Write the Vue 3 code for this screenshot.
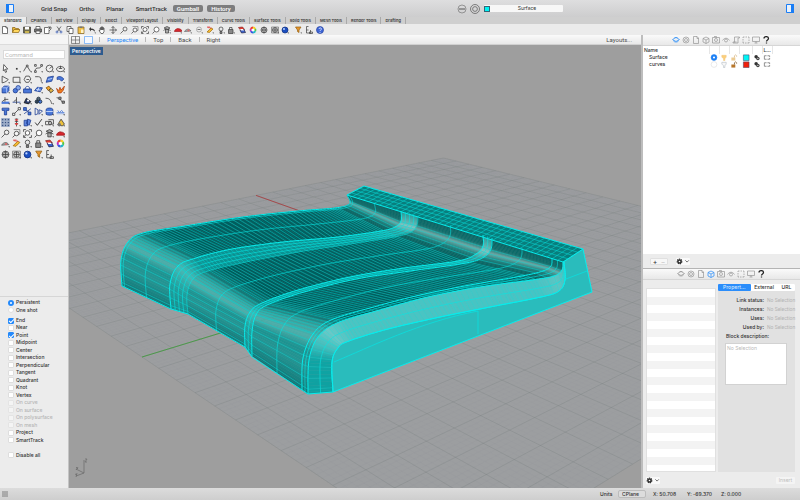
<script setup>
import { ref, h } from 'vue'

/* ---------- icons: each entry is a list of [path, fill, stroke] on a 16 grid ---------- */
const K = '#3c3c3c'
const B = '#4a78d8'
const N = 'none'
const tick = ['M13 13h3l-1.500 2.500z', K, N]
const lens = (x, y, r) => `M${x - r} ${y}a${r} ${r} 0 1 0 ${2 * r} 0a${r} ${r} 0 1 0 ${-2 * r} 0z`
const ICONS = {
  file: [['M3 1h7l3 3v11H3z', '#fff', K], ['M10 1v3h3', N, K]],
  open: [['M1 13V3h5l1 2h6v3', '#e8b93c', '#8a6414'], ['M1 13l3-6h12l-3 6z', '#ffd75e', '#8a6414']],
  save: [['M1 2h14v12H1z', '#6f6a4a', K], ['M4 2h8v5H4z', '#fff', N], ['M4 10h8v4H4z', '#c9b452', N]],
  print: [['M4 6V1h8v5', '#fff', K], ['M1 6h14v6H1z', '#777', K], ['M4 10h8v5H4z', '#fff', K]],
  notes: [['M1 3h9v12H1z', '#fff', K], ['M8 2h6v4l-4 4M11 2v4', '#ddd', K]],
  cut: [['M4 1l7 10M12 1L5 11', N, K], [lens(4, 12, 2), N, '#2f55b5'], [lens(12, 12, 2), N, '#2f55b5']],
  copy: [['M2 1h8v10H2z', '#fff', K], ['M6 5h8v10H6z', '#fff', K]],
  paste: [['M2 2h12v13H2z', '#f1bf45', '#7e6020'], ['M5 1h6v3H5z', '#777', N], ['M8 7h5v7H8z', '#fff3c9', N]],
  undo: [['M2 6l4-4v3c6 0 8 3 8 7-2-3-4-4-8-4v3z', K, N], tick],
  hand: [['M4 9V4h2v4-6h2v6-6h2v6-4h2v7l-2 4H6L2 9z', '#fff', K]],
  pan: [['M8 1v14M1 8h14M5 4l3-3 3 3M5 12l3 3 3-3M12 5l3 3-3 3', N, K]],
  zoom: [[lens(10, 6, 4), '#eee', K], ['M7 9l-6 6', N, K]],
  zoomwin: [['M3 1h11v8H7', N, '#777'], [lens(8, 8, 4), '#f6f6f6', K], ['M5 11l-4 4', N, K]],
  zoomext: [[lens(8, 7, 4), '#fff', K], ['M1 5V1h4M11 1h4v4M1 11v4h4M11 15h4v-4M5 10l-3 4', N, K]],
  zoomsel: [[lens(9, 7, 5), '#fff', K], ['M5 11l-4 4', N, K]],
  cube: [['M2 4l6-3 6 3-5 3zM5 6v8h6V6', '#aaa', K], ['M1 9c2-3 10-3 14 0', N, K], tick],
  car: [['M1 10l2-3 4-2 5 1 3 2v3H1z', '#d8262c', '#a01c20'], tick],
  plane: [['M1 11c3-5 9-7 13-1z', '#aaa', '#666'], [lens(9, 9, 2), '#d66', N], tick],
  dash: [[lens(8, 7, 5), '#eee', '#999'], ['M5 7h6', N, K], tick],
  snap: [['M2 12l8-8 4 2-7 7z', '#f4ba32', '#a06e10'], ['M2 2h6M3 3l8 1', N, '#d33'], tick],
  bulb: [[lens(8, 6, 4), '#e8e8e8', K], ['M6 11h4v4H6z', '#888', K], tick],
  lock: [['M3 7h9v8H3z', '#888', K], ['M5 7V3h5v4', N, K], tick],
  layers: [['M1 3l8-1 4 5-8 1z', '#e0392e', '#822'], ['M4 8l8-1 3 6-8 1z', '#3c62cc', '#224'], ['M4 6l6 0 2 3H6z', '#fff', N]],
  globe: [[lens(8, 8, 6), '#eee', K], ['M8 2v12M2 8h12M8 2c-4 3-4 9 0 12M8 2c4 3 4 9 0 12', N, K]],
  gridball: [['M1 2h14v12H1z', '#ddd', '#777'], [lens(8, 8, 5), '#ccc', K], ['M3 8h10M8 3v10', N, K], tick],
  ball: [[lens(8, 8, 6), '#1c4fc0', '#0c2c80'], [lens(6, 6, 2), '#bcd4ff', N], tick],
  wheel: [['M8 8V1a7 7 0 0 1 6 4z', '#f8d020', N], ['M8 8l6-3a7 7 0 0 1 0 6z', '#58c840', N], ['M8 8l6 3a7 7 0 0 1-6 4z', '#20b8c8', N], ['M8 8v7a7 7 0 0 1-6-4z', '#3858e0', N], ['M8 8l-6 3a7 7 0 0 1 0-6z', '#c030c0', N], ['M8 8L2 5a7 7 0 0 1 6-4z', '#f04030', N], [lens(8, 8, 3), '#fff', N]],
  filter: [['M3 2h11l-4 6v5l-3-2V8z', '#e7962c', '#95600f'], tick],
  dims: [['M3 1h4M3 1v7h4M3 8v6h9M11 8v5M9 12h6v3H9z', N, K]],
  help: [[lens(8, 8, 7), '#3f67d8', '#2742a0'], ['M6 6c0-3 5-3 5 0 0 2-3 2-3 4M8 12v2', N, '#fff']],
  arrow: [['M5 1l7 8H8l2 5-2 1-2-5-2 2z', '#fff', K]],
  point: [['M7 7h3v3H7z', K, N], tick],
  polyline: [['M1 13l6-10 6 10', N, K], ['M6 2h3v3H6z', '#fff', K], tick],
  ctrl: [['M2 13C2 2 13 12 13 2', N, K], ['M1 1h3v3H1zM12 1h3v3h-3zM1 12h3v3H1z', '#fff', K], tick],
  circle: [[lens(8, 8, 6), '#eee', K], ['M8 8l5-4', N, K], tick],
  ellipse: [['M1 9c0-6 14-6 14 0s-14 6-14 0z', '#eee', K], ['M5 8h6M8 3v5', N, K], tick],
  arc: [['M2 2v12c6-1 9-4 11-6', N, K], ['M2 2l11 6', N, K], tick],
  rect: [['M2 4h12v9H2z', '#eee', K], tick],
  polygon: [['M5 2h6l3 5-4 6H5L2 8z', '#eee', K], ['M6 8h5', N, K], tick],
  fillet: [['M2 3h6c4 0 5 3 5 9', N, K], tick],
  srf: [['M2 13l3-9 10-2-3 9z', B, '#1d3d92'], ['M5 8l8-2', N, '#cfe0ff']],
  srf2: [['M2 4c5-3 9 0 12 3l-4 4C8 8 5 7 2 8z', B, '#1d3d92'], tick],
  box: [['M2 5l4-3h8v8l-4 4H2z', B, '#1d3d92'], ['M2 5h8l4-3M10 5v9', N, '#bcd0ff'], tick],
  balls: [[lens(6, 10, 4), B, '#1d3d92'], [lens(11, 5, 4), '#86a8ee', '#1d3d92'], tick],
  tub: [['M1 7h14v7H1z', B, '#1d3d92'], ['M4 7c0-6 8-6 8 0z', '#fff', '#1d3d92']],
  patch: [['M1 10l5-6 9 1-4 7z', B, '#1d3d92'], ['M4 8l8 1M9 4l-3 7', N, '#dfe9ff'], tick],
  gear: [['M2 5l5-3 3 4-4 4z', '#f2a52c', '#7c4b00'], ['M7 9l4-3 4 4-5 4z', '#e5b84a', '#333']],
  flame: [['M4 14L1 6l4 4 2-6 2 5 6-7-2 7-4 5z', '#f08020', '#b04010'], tick],
  trim: [['M1 10h14v4H1z', B, N], ['M7 2v8M2 10l5-4h6', N, K], tick],
  split: [['M1 11h14', N, '#1d3d92'], ['M8 2v12M3 10l5-4', N, K], tick],
  join: [['M2 12l4-8 8 6-4 4z', '#2e3f6c', '#111'], [lens(9, 8, 2), '#fff', N], tick],
  bool: [[lens(5, 10, 3), '#345', '#123'], [lens(11, 10, 3), B, '#123'], [lens(8, 5, 3), '#567', '#123']],
  curve: [['M1 4c8 0 9 4 11 10', N, K], tick],
  curve2: [['M1 3l5 1M7 5l5 7', N, K], ['M5 2h4v4H5zM11 9h4v4h-4z', '#999', K]],
  text: [['M2 2h12v4h-4v8H6V6H2z', B, '#1d3d92']],
  line: [['M3 13L13 3', N, K], ['M1 11h4v4H1zM11 1h4v4h-4z', '#fff', K], tick],
  rotate: [['M2 3l12 9M2 12l12-9', N, '#1d3d92'], ['M1 1h5v5H1zM9 9h5v5H9z', B, '#1d3d92']],
  mirror: [['M2 2l5 3v7l-5 2zM9 5l6 2-6 6z', '#eee', '#1d3d92'], tick],
  solid: [['M2 4c2-3 10-3 12 0v9c-2 2-10 2-12 0z', B, '#1d3d92'], ['M2 8h12', N, '#dfe9ff'], tick],
  level: [['M1 10h14M3 6l3 4 4-4 3 4', N, B], ['M1 12h14', N, '#8aa8e6'], tick],
  array: [['M1 1h4v4H1zM6 1h4v4H6zM11 1h4v4h-4zM1 6h4v4H1zM6 6h4v4H6zM11 6h4v4h-4zM1 11h4v4H1zM6 11h4v4H6zM11 11h4v4h-4z', '#36507f', '#9fb0cc']],
  tower: [['M8 1v14M5 2h6M5 6h6M5 10h6', N, K], ['M6 2h4v3H6zM6 9h4v3H6z', '#e33', N], tick],
  flip: [['M2 4h6v10H2zM8 2l6 2-3 9-5-3z', '#5f86df', '#1d3d92'], tick],
  check: [['M2 8l4 5 8-11', N, '#111'], tick],
  mask: [['M1 6h9v6H1zM6 3h9v8H9', '#eee', K], [lens(9, 9, 3), '#bbb', K], tick],
  cone: [['M3 12L9 2l6 9-4 3z', '#efc23a', K], [lens(6, 12, 3), '#777', N], tick],
}
const Icon = (p) =>
  h('svg', { viewBox: '0 0 16 16', class: 'ic', 'aria-hidden': 'true' },
    ICONS[p.n].map(([d, fill, stroke]) => h('path', { d, fill, stroke, 'stroke-width': 1.4 })))
Icon.props = ['n']

/* panel switcher icons: outline glyphs */
const P = {
  layer: 'M1 7l7-4 7 4-7 4zM3 9c0 4 10 4 10 0M5 3h6',
  ring: lens(8, 8, 6) + lens(8, 8, 3),
  page: 'M3 1h7l3 3v11H3zM10 1v4h3',
  block: 'M2 5l6-3 6 3v7l-6 3-6-3zM2 5l6 3 6-3M8 8v7',
  camera: 'M1 3h14v11H1zM4 1h5v2' + lens(8, 8, 3),
  eye: 'M1 9c4-6 10-6 14 0M5 9a3 3 0 0 0 6 0a3 3 0 0 0-6 0',
  scroll: 'M5 13V2h10v2h-3v10H2v-2h7',
  frame: 'M2 2h3M7 2h3M12 2h2v3M14 7v3M14 12v2h-3M9 14H6M4 14H2v-3M2 9V6M2 4V2',
  screen: 'M1 2h14v9H1zM5 14h6M8 11v3',
  quest: 'M4 5c0-5 9-5 9 0 0 3-4 3-4 6M9 13v2',
}
const panelIcons = Object.keys(P)

const modes = [['Grid Snap'], ['Ortho'], ['Planar'], ['SmartTrack'], ['Gumball', 1], ['History', 1]]
const tabs = ['Standard', 'CPlanes', 'Set View', 'Display', 'Select', 'Viewport Layout', 'Visibility', 'Transform', 'Curve Tools', 'Surface Tools', 'Solid Tools', 'Mesh Tools', 'Render Tools', 'Drafting']
const tools = ['file', 'open', 'save', 'print', 'notes', 'cut', 'copy', 'paste', 'undo', 'hand', 'pan', 'zoom', 'zoomwin', 'zoomext', 'zoomsel', 'cube', 'car', 'plane', 'dash', 'snap', 'bulb', 'lock', 'layers', 'wheel', 'globe', 'gridball', 'ball']
const extraTools = ['filter', 'dims', 'help']
const palette = [
  'arrow', 'point', 'polyline', 'ctrl', 'circle', 'ellipse',
  'arc', 'rect', 'polygon', 'fillet', 'srf', 'srf2',
  'box', 'balls', 'tub', 'patch', 'gear', 'flame',
  'trim', 'split', 'join', 'bool', 'curve', 'curve2',
  'text', 'line', 'rotate', 'mirror', 'solid', 'level',
  'array', 'tower', 'flip', 'check', 'mask', 'cone',
  'zoom', 'zoomwin', 'zoomext', 'zoomsel', 'cube', 'car',
  'plane', 'snap', 'bulb', 'lock', 'layers', 'wheel',
  'globe', 'gridball', 'ball', 'filter', 'dims',
]
const views = ['Perspective', 'Top', 'Back', 'Right']
const activeView = ref('Perspective')
const snapMode = ref('Persistent')
const snaps = ref([
  ['End', true], ['Near', false], ['Point', true], ['Midpoint', false], ['Center', false],
  ['Intersection', false], ['Perpendicular', false], ['Tangent', false], ['Quadrant', false],
  ['Knot', false], ['Vertex', false], ['On curve', false, true], ['On surface', false, true],
  ['On polysurface', false, true], ['On mesh', false, true], ['Project', false], ['SmartTrack', false],
].map(([name, on, off]) => ({ name, on, off: !!off })))
const disableAll = ref(false)
const layers = [
  { name: 'Surface', current: true, color: '#00f4f4' },
  { name: 'curves', current: false, color: '#f0200c' },
]
const fields = ['Link status:', 'Instances:', 'Uses:', 'Used by:']

/* ---------- construction plane grid ---------- */
const project = (u, v) => {
  const X = 314.4 + 331.4 * u + 123.5 * (v + 1)
  const Y = 240 - 10 * u + 17.75 * (v + 1)
  const W = 1.228 + 0.228 * u - 0.25 * (v + 1)
  return (X / W).toFixed(1) + ' ' + (Y / W).toFixed(1)
}
const seg = (a, b, c, d) => `M${project(a, b)}L${project(c, d)}`
let minor = ''
let major = ''
const half = 65
for (let i = -half; i <= half; i++) {
  const t = i / half
  const s = seg(t, -1, t, 1) + seg(-1, t, 1, t)
  if (i % 5 === 0) major += s
  else minor += s
}
const plane = `M${project(-1, -1)}L${project(1, -1)}L${project(1, 1)}L${project(-1, 1)}z`
const xAxis = seg(0, -1, 0, 0)
const yAxis = seg(-1, 0, 0, 0)

/* ---------- model surface: profile rails swept across the seat ---------- */
const rails = {
  A: [[347, 195], [350, 201], [348, 205], [335, 208], [298, 211], [243, 217], [185, 226], [143, 233], [128, 242], [121, 260], [122, 286]],
  B: [[401, 211], [401, 221], [395, 227], [381, 231], [338, 237], [283, 242], [232, 249], [196, 258], [178, 266], [170, 284], [171, 309]],
  B2: [[418, 216], [417, 225], [411, 232], [394, 237], [350, 244], [298, 252], [246, 262], [208, 271], [193, 279], [187, 295], [188, 314]],
  C: [[483, 235], [483, 246], [476, 254], [458, 261], [404, 268], [350, 277], [298, 290], [262, 303], [250, 312], [245, 326], [245, 347]],
  C2: [[492, 238], [491, 249], [484, 257], [466, 263], [410, 271], [356, 279], [304, 292], [267, 305], [256, 315], [252, 332], [252, 356]],
  D: [[552, 258], [551, 266], [543, 271], [522, 276], [470, 285], [420, 295], [370, 308], [331, 320], [313, 334], [303, 358], [302, 390]],
  E: [[563, 262], [562, 270], [554, 276], [532, 280], [480, 287], [428, 297], [376, 311], [337, 323], [318, 337], [309, 360], [308, 394]],
  F: [[564, 262], [565, 280], [559, 291], [541, 297], [490, 307], [440, 317], [388, 329], [349, 341], [338, 348], [332, 362], [333, 392]],
}
const spline = (p, t) => {
  const i = Math.min(Math.floor(t), p.length - 2)
  const f = t - i
  const at = (k) => p[Math.max(0, Math.min(p.length - 1, k))]
  const [a, b, c, d] = [at(i - 1), at(i), at(i + 1), at(i + 2)]
  return [0, 1].map((k) => 0.5 * (2 * b[k] + (c[k] - a[k]) * f + (2 * a[k] - 5 * b[k] + 4 * c[k] - d[k]) * f * f + (3 * b[k] - a[k] - 3 * c[k] + d[k]) * f * f * f))
}
const fmt = (p) => p[0].toFixed(1) + ' ' + p[1].toFixed(1)
const blend = (p, q, s) => [p[0] + (q[0] - p[0]) * s, p[1] + (q[1] - p[1]) * s]
const STEPS = 100
const railPath = (p, q, s) => {
  let d = ''
  for (let i = 0; i <= STEPS; i++) {
    const t = (i / STEPS) * 10
    d += (i ? 'L' : 'M') + fmt(blend(spline(p, t), spline(q, t), s))
  }
  return d
}
const mix = (stops, t) => {
  let i = 0
  while (i < stops.length - 2 && t > stops[i + 1][0]) i++
  const [t0, a] = stops[i]
  const [t1, b] = stops[i + 1]
  const f = Math.max(0, Math.min(1, (t - t0) / (t1 - t0)))
  return `rgb(${a.map((v, k) => Math.round(v + (b[k] - v) * f)).join(',')})`
}
const deck = [
  [0, [6, 96, 96]], [0.9, [14, 110, 108]], [1.5, [112, 172, 168]], [2, [38, 138, 134]], [2.6, [10, 104, 102]], [3.2, [4, 98, 98]],
  [6.6, [0, 92, 92]], [7, [14, 118, 116]], [7.5, [50, 160, 156]], [8.2, [78, 176, 172]], [8.7, [28, 148, 146]], [9.2, [36, 150, 148]], [10, [14, 118, 118]],
]
const band = [
  [0, [20, 150, 148]], [1.5, [130, 200, 196]], [2.4, [40, 160, 158]], [4, [10, 146, 146]], [7, [10, 146, 146]],
  [8, [70, 186, 182]], [9, [30, 160, 158]], [10, [20, 140, 140]],
]
const edge = [
  [0, [60, 190, 190]], [2, [90, 200, 198]], [3, [70, 196, 196]], [6.8, [76, 196, 194]],
  [7.5, [104, 204, 202]], [8.4, [60, 190, 188]], [9, [16, 164, 164]], [10, [14, 160, 160]],
]
const strips = [
  ['A', 'B', deck], ['B', 'B2', band], ['B2', 'C', deck], ['C', 'C2', band],
  ['C2', 'D', deck], ['D', 'E', deck], ['E', 'F', edge],
]
const faces = []
for (const [a, b, stops] of strips) {
  for (let i = 0; i < STEPS; i++) {
    const t0 = (i / STEPS) * 10
    const t1 = ((i + 1) / STEPS) * 10
    const [p, q] = [rails[a], rails[b]]
    const c = mix(stops, (t0 + t1) / 2)
    faces.push({ d: `M${fmt(spline(p, t0))}L${fmt(spline(q, t0))}L${fmt(spline(q, t1))}L${fmt(spline(p, t1))}z`, c })
  }
}
/* isocurves running across the seat: dense on the deck, sparse on the front drop */
const crossAt = []
for (let t = 1.1; t < 3; t += 0.45) crossAt.push(t)
for (let t = 3; t < 6.9; t += 0.092) crossAt.push(t)
for (let t = 6.95; t < 8; t += 0.2) crossAt.push(t)
for (let t = 8; t < 10; t += 0.3) crossAt.push(t)
const order = ['A', 'B', 'B2', 'C', 'C2', 'D', 'E']
const cross = crossAt.map((t) => 'M' + order.map((k) => fmt(spline(rails[k], t))).join('L')).join('')
const crossEdge = crossAt.map((t) => `M${fmt(spline(rails.E, t))}L${fmt(spline(rails.F, t))}`).join('')

const R = rails
const fine = [
  [R.A, R.B, 0.05], [R.A, R.B, 0.5], [R.B, R.B2, 0.25], [R.B, R.B2, 0.5], [R.B, R.B2, 0.75], [R.B, R.B2, 1],
  [R.B2, R.C, 0.5], [R.C, R.C2, 0.5], [R.C2, R.D, 0.5], [R.D, R.E, 0.5], [R.E, R.F, 0.5],
].map(([p, q, s]) => railPath(p, q, s)).join('')
const bold = [R.A, R.B, R.C, R.C2, R.D, R.E, R.F].map((p) => railPath(p, p, 0)).join('')

const front = railPath(R.F, R.F, 0) + 'L592 292L583 249L563 262z'
const cap = 'M347 195L364 186L583 249L563 262z'
let capLines = ''
for (let i = 1; i < 40; i++) {
  const s = i / 40
  capLines += `M${fmt(blend([347, 195], [563, 262], s))}L${fmt(blend([364, 186], [583, 249], s))}`
}
for (const s of [0.25, 0.5, 0.75]) {
  capLines += `M${fmt(blend([347, 195], [364, 186], s))}L${fmt(blend([563, 262], [583, 249], s))}`
}
</script>

<template>
  <div class="app">
    <header class="titlebar">
      <button class="pane" aria-label="Toggle left sidebar"><svg viewBox="0 0 8 9"><path d="M.5.5h7v8h-7z" fill="#e9f1fb" stroke="#1a7df5" /><path d="M0 0h3v9H0z" fill="#1a7df5" /></svg></button>
      <nav class="modes">
        <button v-for="m in modes" :key="m[0]" :class="{ on: m[1] }">{{ m[0] }}</button>
      </nav>
      <div class="current">
        <svg viewBox="0 0 10 10" class="round"><circle cx="5" cy="5" r="4" fill="none" stroke="#777" stroke-width=".7" /><path d="M2 5h6" stroke="#555" stroke-width="1" /></svg>
        <svg viewBox="0 0 10 10" class="round"><circle cx="5" cy="5" r="4.500" fill="none" stroke="#555" stroke-width=".7" /><circle cx="5" cy="5" r="2.400" fill="none" stroke="#555" stroke-width=".7" /></svg>
        <button class="layerpick"><i class="chip"></i><span>Surface</span></button>
      </div>
      <button class="pane" aria-label="Toggle right sidebar"><svg viewBox="0 0 8 9"><path d="M.5.5h7v8h-7z" fill="#e9f1fb" stroke="#1a7df5" /><path d="M5 0h3v9H5z" fill="#1a7df5" /></svg></button>
    </header>

    <nav class="tabs">
      <div class="tabset"><button v-for="(t, i) in tabs" :key="t" :class="{ on: i === 0 }">{{ t }}</button></div>
    </nav>

    <div class="toolbar">
      <button v-for="t in tools" :key="t" :aria-label="t"><Icon :n="t" /></button>
      <span class="gap"></span>
      <button v-for="t in extraTools" :key="t" :aria-label="t"><Icon :n="t" /></button>
    </div>

    <div class="body">
      <aside class="left">
        <div class="lefthead"></div>
        <input class="cmd" placeholder="Command" aria-label="Command" />
        <div class="palette">
          <button v-for="(t, i) in palette" :key="i" :aria-label="t"><Icon :n="t" /></button>
        </div>
        <form class="osnap">
          <div class="radios">
            <label v-for="m in ['Persistent', 'One shot']" :key="m"><input v-model="snapMode" type="radio" name="snapmode" :value="m" />{{ m }}</label>
          </div>
          <div class="checks">
            <label v-for="s in snaps" :key="s.name" :class="{ off: s.off }"><input v-model="s.on" type="checkbox" :disabled="s.off" />{{ s.name }}</label>
            <span></span>
            <label><input v-model="disableAll" type="checkbox" />Disable all</label>
          </div>
        </form>
      </aside>

      <main class="center">
        <div class="viewtabs">
          <svg viewBox="0 0 10 9" class="lay"><path d="M.5.5h9v8h-9zM5 0v9M0 4.500h10" fill="none" stroke="#666" stroke-width=".8" /></svg>
          <svg viewBox="0 0 10 9" class="lay"><path d="M.5.5h9v8h-9z" fill="#f4f8ff" stroke="#5da2f5" stroke-width=".8" /></svg>
          <button v-for="v in views" :key="v" :class="{ on: v === activeView }" @click="activeView = v">{{ v }}</button>
          <button class="layouts">Layouts...</button>
        </div>
        <div class="viewport">
          <span class="vlabel">Perspective</span>
          <svg class="scene" viewBox="69 45 572 443" preserveAspectRatio="xMinYMin slice">
            <path :d="plane" fill="#9a9ea1" fill-opacity=".5" />
            <path :d="minor" fill="none" stroke="#8c9094" stroke-opacity=".2" stroke-width=".5" />
            <path :d="major" fill="none" stroke="#74787a" stroke-opacity=".38" stroke-width=".7" />
            <path :d="xAxis" stroke="#a54a4c" stroke-width="1" />
            <path :d="yAxis" stroke="#4c9a4a" stroke-width="1" />
            <path v-for="(f, i) in faces" :key="i" :d="f.d" :fill="f.c" :stroke="f.c" stroke-width=".4" />
            <path :d="cross" fill="none" stroke="#08d2d0" stroke-width=".8" stroke-opacity=".62" />
            <path :d="crossEdge" fill="none" stroke="#12dcda" stroke-width=".6" stroke-opacity=".5" />
            <path :d="front" fill="#2abcbc" stroke="#08ecec" />
            <path d="M334 362C370 347 420 322 478 311V334M566 279L587 271" fill="none" stroke="#0adfdf" stroke-width=".8" />
            <path :d="cap" fill="#087e7d" stroke="#08ecec" />
            <path :d="capLines" stroke="#08dedc" stroke-width=".6" stroke-opacity=".85" />
            <path :d="fine" fill="none" stroke="#06e6e4" stroke-width=".7" stroke-opacity=".85" />
            <path :d="bold" fill="none" stroke="#08ecec" stroke-width="1" />
            <path d="M122 286L171 309L188 314L245 347L252 357L302 390L308 394L333 392" fill="none" stroke="#08ecec" />
            <g fill="none" stroke="#6e6e6e" stroke-width=".8">
              <path d="M84 473V460M84 473l-8-4M84 473l-8 3" />
              <path d="M85 459h2l-2 3h2M76 467l2 2M78 467l-2 3M75 474l2 1M77 473l-1 4" />
            </g>
          </svg>
        </div>
      </main>

      <aside class="right">
        <section class="layerpanel">
          <div class="switch">
            <button v-for="(k, i) in panelIcons" :key="k" :aria-label="k" :class="{ on: i === 0, q: k === 'quest' }"><svg viewBox="0 0 16 16"><path :d="P[k]" /></svg></button>
          </div>
          <table>
            <colgroup><col /><col class="c10" /><col class="c10" /><col class="c10" /><col class="c13" /><col class="c10" /><col class="c10" /><col class="rest" /></colgroup>
            <thead><tr><th>Name</th><th></th><th></th><th></th><th></th><th></th><th>L...</th><th></th></tr></thead>
            <tbody>
              <tr v-for="l in layers" :key="l.name">
                <td class="nm">{{ l.name }}</td>
                <td><svg viewBox="0 0 8 8"><circle cx="4" cy="4" r="3.300" :fill="l.current ? '#1d80f5' : '#fff'" :stroke="l.current ? '#1d80f5' : '#ddd'" stroke-width=".7" /><circle cx="4" cy="4" r="1.200" fill="#fff" /></svg></td>
                <td><svg viewBox="0 0 8 8"><path d="M1.500 1.500h5v2L5 5.500v2H3.500v-2l-2-2z" :fill="l.current ? '#fbcf7c' : '#f7f7f7'" :stroke="l.current ? '#f4c67a' : '#aab4bd'" stroke-width=".6" /></svg></td>
                <td><svg viewBox="0 0 8 8"><path d="M1 4h4.500v3.500H1z" :fill="l.current ? '#eccb92' : '#b8772a'" /><path d="M4.500 4V2Q6 0 7 2v1" fill="none" :stroke="l.current ? '#d9b784' : '#7f5a2c'" stroke-width=".9" /></svg></td>
                <td><svg viewBox="0 0 8 8"><path d="M1 1h6.500v6.500H1z" :fill="l.color" stroke="#446" stroke-width=".6" /></svg></td>
                <td><svg viewBox="0 0 8 8"><circle cx="3" cy="3" r="2" fill="#333" /><circle cx="5" cy="5" r="2" fill="#444" /><circle cx="5" cy="5" r=".7" fill="#ddd" /></svg></td>
                <td><svg viewBox="0 0 8 8"><path d="M3.500 2H1v4h2.500M4.500 2H7v1.500M7 4.500V6H4.500" fill="none" stroke="#777" stroke-width=".9" /></svg></td>
                <td></td>
              </tr>
            </tbody>
          </table>
          <div class="foot">
            <div class="pair"><button aria-label="Add layer">+</button><button aria-label="Remove layer" class="dim">−</button></div>
            <button class="gearbtn" aria-label="Layer actions"><svg viewBox="0 0 12 6"><circle cx="3" cy="3" r="2" fill="#333" stroke="#333" stroke-width="1" stroke-dasharray="1 .6" /><circle cx="3" cy="3" r=".7" fill="#fff" /><path d="M8 2l1.500 1.500L11 2" fill="none" stroke="#555" stroke-width=".7" /></svg></button>
          </div>
        </section>

        <section class="blockpanel">
          <div class="switch">
            <button v-for="(k, i) in panelIcons" :key="k" :aria-label="k" :class="{ on: i === 3, q: k === 'quest', skip: k === 'scroll' }"><svg viewBox="0 0 16 16"><path :d="P[k]" /></svg></button>
          </div>
          <div class="split">
            <div class="list"></div>
            <div class="props">
              <div class="segment"><button class="on">Propert...</button><button>External</button><button>URL</button></div>
              <dl>
                <template v-for="f in fields" :key="f"><dt>{{ f }}</dt><dd>No Selection</dd></template>
              </dl>
              <label class="desc" for="desc">Block description:</label>
              <textarea id="desc" placeholder="No Selection"></textarea>
            </div>
          </div>
          <div class="foot end">
            <button class="gearbtn" aria-label="Block actions"><svg viewBox="0 0 12 6"><circle cx="3" cy="3" r="2" fill="#333" stroke="#333" stroke-width="1" stroke-dasharray="1 .6" /><circle cx="3" cy="3" r=".7" fill="#fff" /><path d="M8 2l1.500 1.500L11 2" fill="none" stroke="#555" stroke-width=".7" /></svg></button>
            <button class="insert" disabled>Insert</button>
          </div>
        </section>
      </aside>
    </div>

    <footer class="status">
      <svg viewBox="0 0 6 6" class="menu"><path d="M0 1h6M0 3h6M0 5h6" stroke="#777" stroke-width=".9" /></svg>
      <div class="coords">
        <span class="units">Units</span>
        <select aria-label="Coordinate system"><option>CPlane</option><option>World</option></select>
        <span class="co">X: 50.708</span><span class="co">Y: -69.370</span><span class="co">Z: 0.000</span>
      </div>
    </footer>
  </div>
</template>

<style>
body { background: #ececec; overflow: hidden; }
</style>

<style scoped>
.app {
  display: flex;
  flex-direction: column;
  height: 100vh;
  font-family: Inter, "Liberation Sans", sans-serif;
  font-size: 5px;
  line-height: 7px;
  color: #303030;
}
.app * { box-sizing: border-box; }
button, input, textarea, select { font: inherit; color: inherit; margin: 0; }
button { padding: 0; border: 0; background: none; white-space: nowrap; }
svg { display: block; }

.titlebar {
  flex: none;
  display: flex;
  align-items: center;
  height: 17px;
  padding: 0 6px;
  background: linear-gradient(#dededf, #cdcdce);
}
.pane svg { width: 8px; height: 9px; }
.modes { display: flex; align-items: center; gap: 12px; margin-left: 27px; font-family: Roboto, sans-serif; font-size: 6px; font-weight: 500; }
.modes .on { width: 30px; height: 7px; border-radius: 2px; background: #7d7d7e; color: #fff; margin-left: -6px; }
.modes .on + .on { margin-left: -8px; width: 28px; }
.modes button { line-height: 7px; }
.current { display: flex; align-items: center; gap: 3px; margin: 0 auto; }
.round { width: 10px; height: 10px; }
.layerpick {
  display: flex;
  align-items: center;
  width: 79px;
  height: 7px;
  margin-left: 1px;
  border-radius: 1px;
  background: #f7f7f7;
}
.layerpick span { flex: 1; }
.chip { width: 6px; height: 6px; border: 1px solid #367; background: #00f4f4; }

.tabs { flex: none; height: 7px; background: #cfcfcf; }
.tabset { display: flex; width: 406px; height: 7px; }
.tabset button {
  flex: 1 1 auto;
  border-right: 1px solid #a9a9a9;
  font-size: 4px;
  font-weight: 600;
  line-height: 7px;
  color: #3a3a3a;
}
.tabset .on { background: #ebebeb; }

.toolbar { flex: none; display: flex; align-items: center; height: 11px; background: #ebebeb; padding-right: 475px; }
.toolbar button { flex: 1; display: flex; justify-content: center; }
.toolbar .gap { width: 2px; }
.ic { width: 9px; height: 9px; }
.toolbar .ic { width: 8px; height: 8px; }

.body { flex: 1; min-height: 0; display: flex; }
.left { flex: none; display: flex; flex-direction: column; width: 69px; background: #ececec; border-right: 1px solid #c4c4c4; }
.lefthead { height: 10px; border-bottom: 1px solid #dcdcdc; background: #f5f5f5; }
.cmd { width: 62px; height: 9px; margin: 5px 3px 4px; padding: 0 1px; border: 1px solid #dadada; background: #fff; font-family: Roboto, sans-serif; font-size: 6px; line-height: 7px; }
.cmd::placeholder, textarea::placeholder { color: #b9b9b9; opacity: 1; }
.palette { display: grid; grid-template-columns: repeat(6, 11px); grid-template-rows: repeat(9, 1fr); height: 97px; }
.palette button { display: grid; place-items: center; }
.osnap { display: flex; flex-direction: column; gap: 3px; margin-top: auto; padding: 2px 0 29px 8px; border-top: 1px solid #d6d6d6; font-weight: 500; }
.radios, .checks { display: grid; grid-auto-rows: 1fr; }
.radios { height: 15px; }
.checks { height: 142px; }
.osnap label { display: flex; align-items: center; gap: 2px; line-height: 7px; height: 7px; }
.osnap .off { color: #b5b5b5; }
.osnap input { appearance: none; flex: none; display: grid; place-items: center; width: 6px; height: 6px; border: 1px solid #dedede; border-radius: 1px; background: #fff; }
.osnap .off input { background: #f4f4f4; border-color: #e4e4e4; }
.osnap input[type="radio"] { border-radius: 50%; }
.osnap input[type="radio"]:checked { border: 2px solid #2389fb; }
.osnap input[type="checkbox"]:checked { border-color: #2389fb; background: #2389fb; }
.osnap input[type="checkbox"]:checked::after {
  content: "";
  width: 4px;
  height: 2px;
  border: solid #fff;
  border-width: 0 0 1px 1px;
  transform: rotate(-45deg);
}

.center { flex: 1; min-width: 0; display: flex; flex-direction: column; }
.viewtabs { flex: none; display: flex; align-items: center; height: 10px; padding: 0 9px 0 2px; background: linear-gradient(#fafafa, #e8e8e8); border-bottom: 1px solid #d0d0d0; font-family: Roboto, sans-serif; font-size: 6px; }
.lay { width: 9px; height: 8px; margin-right: 4px; }
.viewtabs button { padding: 0 7px; border-left: 1px solid #b8b8b8; line-height: 5px; color: #4a4a4a; }
.viewtabs .lay + button { margin-left: 2px; }
.viewtabs .on { color: #1c86f8; }
.viewtabs .layouts { margin-left: auto; padding: 0; border: 0; }
.viewport { position: relative; flex: 1; min-height: 0; background: #9e9e9e; overflow: hidden; }
.scene { width: 100%; height: 100%; }
.vlabel { position: absolute; left: 1px; top: 2px; padding: 0 2px; background: #2d5b8f; color: #fff; font-size: 5px; font-weight: 600; line-height: 8px; }

.right { flex: none; width: 159px; display: flex; flex-direction: column; border-left: 2px solid #bdbdbd; background: #ececec; }
.switch { flex: none; display: flex; align-items: center; justify-content: center; gap: 2px; height: 11px; padding-right: 2px; background: linear-gradient(#fafafa, #e8e8e8); border-bottom: 1px solid #d6d6d6; }
.switch svg { width: 8px; height: 8px; }
.switch path { fill: none; stroke: #8e8e8e; stroke-width: 1.3; }
.switch .on path { stroke: #3b95f8; stroke-width: 1.6; }
.switch .q path { stroke: #222; stroke-width: 2.6; }
.switch .skip { display: none; }
.layerpanel { display: flex; flex-direction: column; height: 233px; background: #fff; }
table { width: 100%; border-collapse: collapse; table-layout: fixed; background: #fff; font-weight: 500; }
.c10 { width: 10px; }
.c13 { width: 13px; }
.rest { width: 28px; }
th { height: 8px; padding: 0 1px; text-align: left; font-weight: 500; font-size: 5px; border-right: 1px solid #e6e6e6; line-height: 6px; }
th:last-child { border-right: 0; }
td { height: 7px; padding: 0; line-height: 7px; }
td svg { width: 8px; height: 7px; margin: 0 auto; }
td.nm { padding-left: 6px; }
.foot { flex: none; display: flex; align-items: center; height: 14px; margin-top: auto; padding: 0 7px; gap: 8px; background: #ececec; }
.pair { display: flex; width: 18px; height: 7px; background: #f7f7f7; border: 1px solid #e0e0e0; border-radius: 1px; }
.pair button { flex: 1; line-height: 5px; font-size: 7px; }
.dim { color: #c4c4c4; }
.gearbtn { background: #fafafa; border-radius: 1px; }
.gearbtn svg { width: 14px; height: 7px; }
.blockpanel { flex: 1; min-height: 0; display: flex; flex-direction: column; border-top: 1px solid #b4b4b4; }
.split { flex: 1; min-height: 0; display: flex; gap: 2px; padding: 4px 5px 0 3px; }
.list { width: 70px; margin-top: 4px; border: 1px solid #e0e0e0; background: repeating-linear-gradient(#fff 0 8px, #f3f3f3 8px 16px); }
.props { flex: 1; min-width: 0; background: #e1e1e1; }
.segment { display: flex; height: 7px; background: #fff; border-radius: 1px; font-weight: 500; }
.segment button { flex: 1 1 auto; padding: 0 3px; }
.segment .on { width: 31px; background: #2b8dfb; color: #d5e8ff; border-radius: 1px; }
dl { display: grid; grid-template-columns: 46px 1fr; grid-auto-rows: 9px; column-gap: 3px; margin: 5px 0 0; align-items: center; white-space: nowrap; }
dt { text-align: right; font-weight: 500; }
dd { margin: 0; color: #b4b4b4; font-family: Roboto, sans-serif; }
.desc { display: block; margin: 1px 0 3px 8px; font-weight: 500; }
textarea { display: block; width: 62px; height: 42px; margin: 0 0 0 7px; padding: 1px; border: 1px solid #d2d2d2; background: #fff; resize: none; line-height: 6px; }
.end { height: 16px; justify-content: space-between; padding: 0 5px 0 3px; }
.insert { width: 19px; height: 7px; background: #f4f4f4; border-radius: 1px; color: #bdbdbd; line-height: 7px; }

.status { flex: none; display: flex; align-items: center; justify-content: space-between; height: 12px; padding: 0 2px; background: linear-gradient(#dcdcdc, #cecece); font-weight: 500; }
.menu { width: 6px; height: 6px; }
.coords { display: flex; align-items: center; width: 198px; }
.units { width: 18px; }
select { appearance: none; width: 28px; height: 8px; margin-right: 7px; padding: 0 3px; border: 1px solid #bcbcbc; border-radius: 2px; background: #dcdcdc; line-height: 6px; }
.co { width: 34px; white-space: nowrap; }
</style>
